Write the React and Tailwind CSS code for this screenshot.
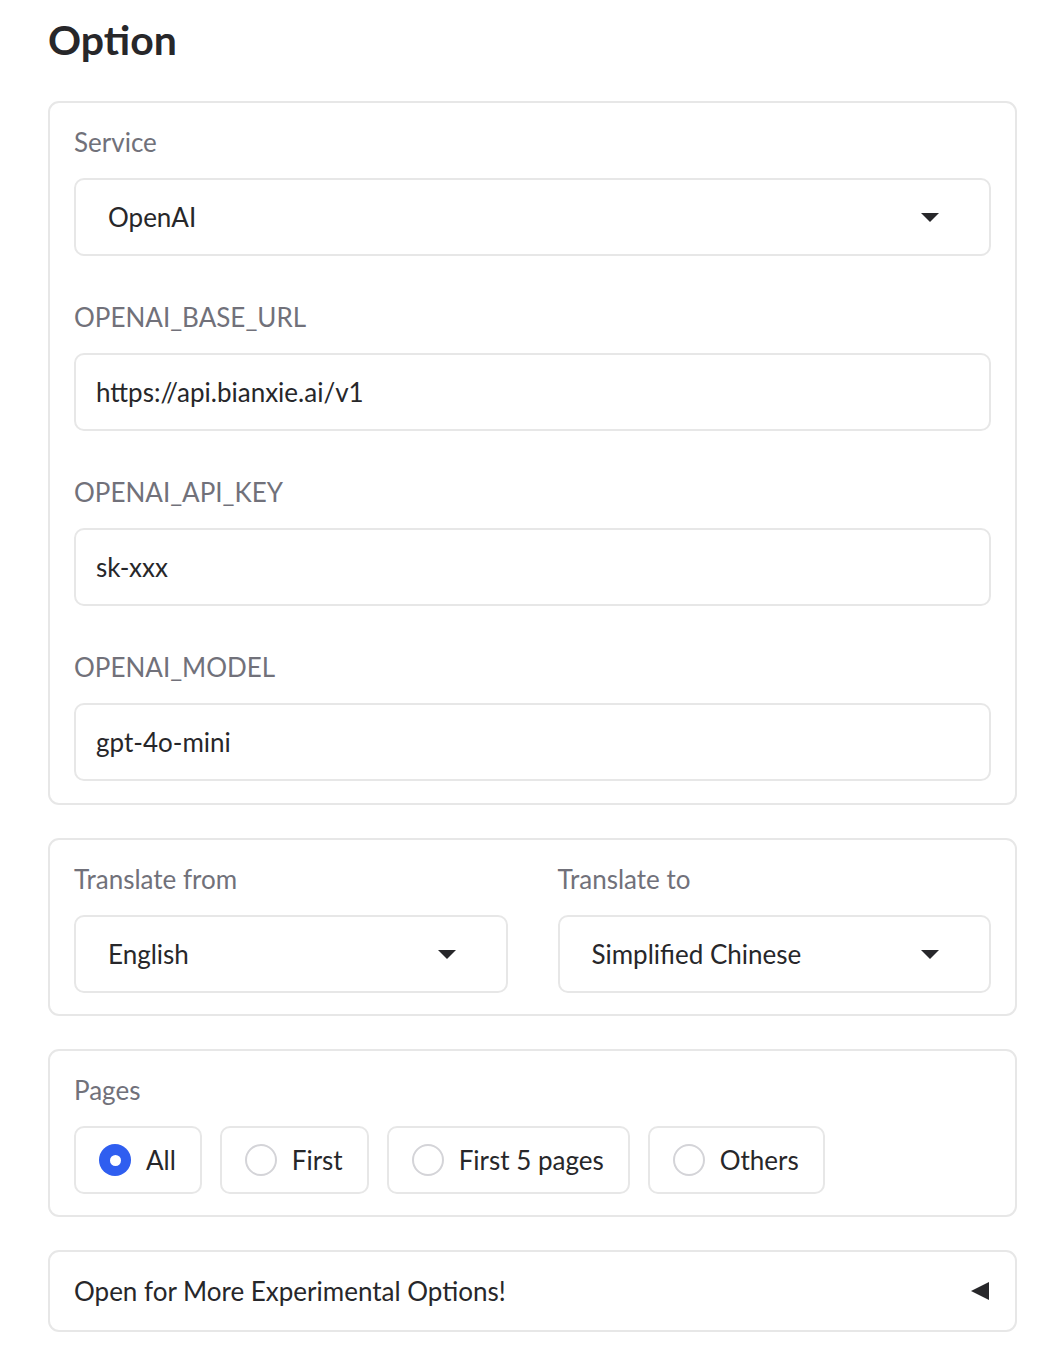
import React from "react";

function Caret() {
  return (
    <svg width="18" height="9" viewBox="0 0 18 9" className="shrink-0">
      <polygon points="0,0 18,0 9,9" fill="#27272a" />
    </svg>
  );
}

function Label({ children }) {
  return <div className="h-[38px] leading-[38px] text-[26px] text-[#71717a] mb-[17px] whitespace-nowrap">{children}</div>;
}

function SelectBox({ value }) {
  return (
    <div className="h-[78px] rounded-[10px] border-2 border-[#e7e7e7] bg-white flex items-center pl-[32px] pr-[50px]">
      <span className="flex-1 text-[26px] text-[#27272a]">{value}</span>
      <Caret />
    </div>
  );
}

function InputBox({ value }) {
  return (
    <div className="h-[78px] rounded-[10px] border-2 border-[#e7e7e7] bg-white flex items-center pl-[20px]">
      <span className="text-[26px] text-[#27272a]">{value}</span>
    </div>
  );
}

function Card({ children, className = "" }) {
  return <div className={"rounded-[11px] border-2 border-[#e7e7e7] bg-white px-[24px] " + className}>{children}</div>;
}

function Radio({ label, checked }) {
  return (
    <div className="h-[68px] rounded-[10px] border-2 border-[#e7e7e7] bg-white flex items-center pl-[23px] pr-[24px] gap-[15px]">
      {checked ? (
        <span className="w-[32px] h-[32px] rounded-full bg-[#2f5ef0] flex items-center justify-center">
          <span className="w-[11px] h-[11px] rounded-full bg-white" />
        </span>
      ) : (
        <span className="w-[32px] h-[32px] rounded-full border-2 border-[#d4d4d8] bg-white" />
      )}
      <span className="text-[26px] text-[#27272a] whitespace-nowrap">{label}</span>
    </div>
  );
}

export default function App() {
  return (
    <div className="min-h-[1368px] bg-white pl-[48px] pr-[29px] font-['Lato',sans-serif]">
      <h1 className="pt-[15px] h-[101px] text-[41px] leading-[49px] font-bold text-[#27272a]">Option</h1>
      <div className="flex flex-col gap-[33px]">
        <Card className="pt-[20px] pb-[22px]">
          <div>
            <Label>Service</Label>
            <SelectBox value="OpenAI" />
          </div>
          <div className="mt-[42px]">
            <Label>OPENAI_BASE_URL</Label>
            <InputBox value="https://api.bianxie.ai/v1" />
          </div>
          <div className="mt-[42px]">
            <Label>OPENAI_API_KEY</Label>
            <InputBox value="sk-xxx" />
          </div>
          <div className="mt-[42px]">
            <Label>OPENAI_MODEL</Label>
            <InputBox value="gpt-4o-mini" />
          </div>
        </Card>

        <Card className="pt-[20px] pb-[21px]">
          <div className="grid grid-cols-2 gap-[50px]">
            <div>
              <Label>Translate from</Label>
              <SelectBox value="English" />
            </div>
            <div>
              <Label>Translate to</Label>
              <SelectBox value="Simplified Chinese" />
            </div>
          </div>
        </Card>

        <Card className="pt-[20px] pb-[21px]">
          <Label>Pages</Label>
          <div className="flex gap-[18px]">
            <Radio label="All" checked />
            <Radio label="First" />
            <Radio label="First 5 pages" />
            <Radio label="Others" />
          </div>
        </Card>

        <Card className="h-[82px] flex items-center pr-[26px]">
          <span className="flex-1 text-[26px] text-[#27272a]">Open for More Experimental Options!</span>
          <svg width="18" height="18" viewBox="0 0 18 18" className="shrink-0">
            <polygon points="18,0 18,18 0,9" fill="#27272a" />
          </svg>
        </Card>
      </div>
    </div>
  );
}
